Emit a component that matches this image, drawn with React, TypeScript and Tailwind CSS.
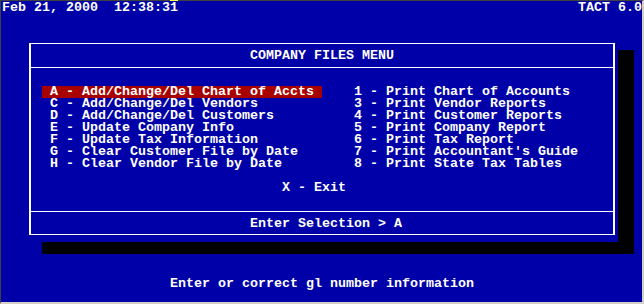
import React from "react";

const leftItems = [
  "A - Add/Change/Del Chart of Accts",
  "C - Add/Change/Del Vendors",
  "D - Add/Change/Del Customers",
  "E - Update Company Info",
  "F - Update Tax Information",
  "G - Clear Customer File by Date",
  "H - Clear Vendor File by Date",
];

const rightItems = [
  "1 - Print Chart of Accounts",
  "3 - Print Vendor Reports",
  "4 - Print Customer Reports",
  "5 - Print Company Report",
  "6 - Print Tax Report",
  "7 - Print Accountant's Guide",
  "8 - Print State Tax Tables",
];

function Row({ className = "", children }: { className?: string; children?: React.ReactNode }) {
  return <div className={"h-[12px] whitespace-pre " + className}>{children}</div>;
}

function Separator() {
  return (
    <div className="h-[12px] pt-[5px]">
      <div className="h-px bg-white" />
    </div>
  );
}

export default function App() {
  return (
    <div className="w-[644px] h-[304px] bg-[#0000a8] border-l border-t border-r-2 border-b-2 border-l-[#404040] border-t-[#404040] border-r-[#d4d0c8] border-b-[#d4d0c8] pl-px pt-px text-white font-['Liberation_Mono',monospace] font-bold text-[13.33px] leading-[12px]">
      {/* status line */}
      <Row className="flex justify-between">
        <span>
          Feb 21, 2000  12:38:3
          <span className="shadow-[inset_0_1px_0_#ffff55]">1</span>
        </span>
        <span>TACT 6.0</span>
      </Row>
      <div className="h-[24px]" />

      {/* menu box */}
      <div className="ml-[24px] w-[592px] bg-[#0000a8] shadow-[16px_12px_0_0_#000] pt-[5px] pb-[7px] px-[3px]">
        <div className="border-x-2 border-y border-white pt-[6px] pb-[4px]">
          <Row className="text-center">COMPANY FILES MENU</Row>
          <Separator />
          <Row />
          {leftItems.map((item, i) => (
            <Row key={item} className="flex pl-[11px]">
              <span className={i === 0 ? "w-[280px] pl-[8px] bg-[#a80000]" : "w-[280px] pl-[8px]"}>{item}</span>
              <span className="ml-[32px]">{rightItems[i]}</span>
            </Row>
          ))}
          <Row />
          <Row className="pl-[251px]">X - Exit</Row>
          <Row />
          <Separator />
          <Row className="pl-[219px]">Enter Selection &gt; A</Row>
        </div>
      </div>

      <div className="h-[36px]" />
      <Row className="pl-[168px]">Enter or correct gl number information</Row>
    </div>
  );
}
